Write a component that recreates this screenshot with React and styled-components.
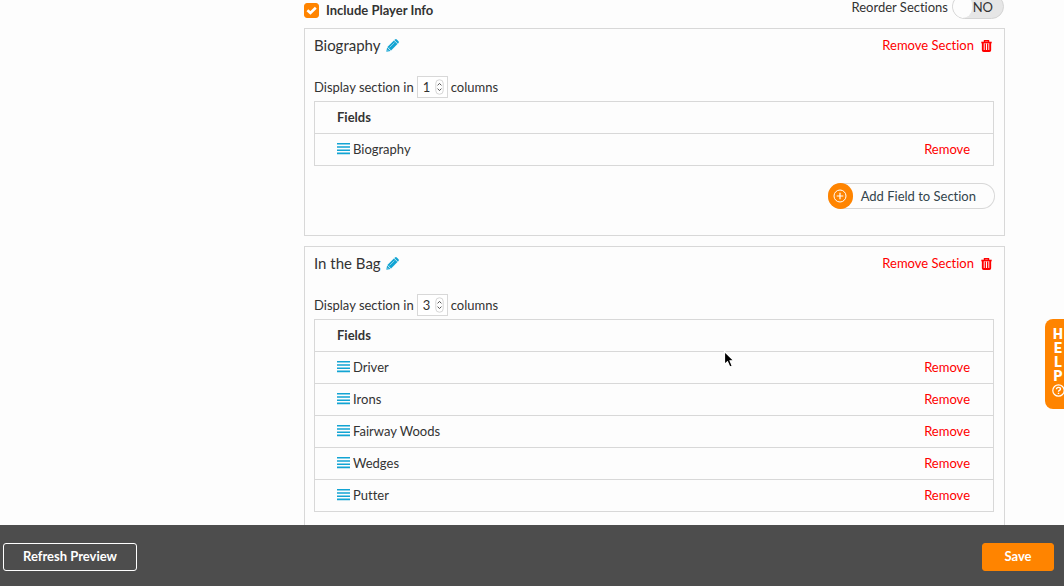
import {useState} from 'react'
import styled, {createGlobalStyle} from 'styled-components'

const GlobalStyle = createGlobalStyle`
    * {
        box-sizing: border-box;
    }
    body {
        margin: 0;
        background: #fdfdfd;
        overflow: hidden;
    }
    body, button, input {
        font-family: Lato, "Liberation Sans", sans-serif;
        font-size: 13px;
        font-variant-ligatures: none;
        line-height: 16px;
        color: #333;
    }
`

const Page = styled.div`
    display: flex;
    flex-direction: column;
    height: 100vh;
`

const Main = styled.main`
    flex: 1;
    min-height: 0;
    overflow: hidden;
    padding: 0 59px 0 304px;
`

const Toolbar = styled.div`
    display: flex;
    justify-content: space-between;
    align-items: center;
    height: 32px;
    margin: -6px 0 2px;
`

const CheckLabel = styled.label`
    display: flex;
    align-items: center;
    gap: 7px;
    font-weight: bold;
`

const Checkbox = styled.input`
    appearance: none;
    width: 15px;
    height: 15px;
    margin: 0;
    border-radius: 3px;
    border: 1px solid #ff8400;
    background: #fff;
    &:checked {
        background: #ff8400;
    }
`

const CheckBoxWrap = styled.span`
    position: relative;
    display: flex;
    svg {
        position: absolute;
        inset: 0;
        pointer-events: none;
    }
`

const ToggleLabel = styled.label`
    display: flex;
    align-items: center;
    align-self: flex-start;
    gap: 4px;
    margin-right: 1px;
`

const Toggle = styled.button`
    display: flex;
    align-items: center;
    width: 52px;
    height: 25px;
    padding: 0 10px 0 0;
    border: 1px solid #d4d4d4;
    border-radius: 13px;
    background: #e6e6e6;
    overflow: hidden;
    span {
        flex: 1;
        text-align: right;
    }
    &::before {
        content: '';
        width: 19px;
        height: 23px;
        border-radius: 10px;
        background: #fdfdfd;
    }
`

const Section = styled.section`
    padding: 0 9px 26px;
    margin-bottom: 10px;
    border: 1px solid #d8d8d8;
`

const SectionHeader = styled.header`
    display: flex;
    justify-content: space-between;
    align-items: center;
    height: 31px;
    margin-bottom: 16px;
    padding-right: 3px;
`

const Title = styled.h2`
    display: flex;
    align-items: center;
    gap: 5px;
    margin: 0;
    font-size: 15px;
    font-weight: normal;
`

const LinkButton = styled.button`
    display: inline-flex;
    align-items: center;
    gap: 7px;
    padding: 0;
    border: 0;
    background: none;
    color: ${props => props.color};
    cursor: pointer;
    svg {
        margin-top: 2px;
    }
`

const ColumnsLabel = styled.label`
    display: flex;
    align-items: center;
    gap: 3px;
    height: 22px;
    margin-bottom: 3px;
`

const NumberBox = styled.span`
    display: flex;
    align-items: center;
    width: 31px;
    height: 22px;
    padding: 0 3px 0 5px;
    border: 1px solid #d8d8d8;
    background: #fff;
    svg {
        flex: none;
    }
`

const NumberInput = styled.input`
    appearance: textfield;
    width: 12px;
    padding: 0;
    border: 0;
    background: none;
    outline: 0;
    &::-webkit-inner-spin-button {
        display: none;
    }
`

const TableWrap = styled.div`
    padding-right: 1px;
`

const Table = styled.table`
    width: 100%;
    border-collapse: collapse;
    border: 1px solid #d8d8d8;
    th, td {
        height: 32px;
        padding: 0 23px 2px 22px;
        border-top: 1px solid #d8d8d8;
        text-align: left;
    }
`

const FieldRow = styled.div`
    display: flex;
    align-items: center;
    justify-content: space-between;
`

const FieldName = styled.span`
    display: flex;
    align-items: center;
    gap: 3px;
`

const Actions = styled.div`
    display: flex;
    justify-content: flex-end;
    margin-top: 17px;
`

const AddButton = styled.button`
    display: flex;
    align-items: center;
    height: 26px;
    padding: 0 19px 0 0;
    gap: 8px;
    border: 0;
    border-radius: 13px;
    background: #fdfdfd;
    box-shadow: inset 0 0 0 1px #d8d8d8;
    color: #33444c;
`

const AddIcon = styled.span`
    display: flex;
    align-items: center;
    justify-content: center;
    width: 25px;
    height: 26px;
    border-radius: 13px;
    background: #ff8400;
`

const Footer = styled.footer`
    display: flex;
    justify-content: space-between;
    align-items: center;
    height: 61px;
    padding: 2px 10px 0 3px;
    background: #4d4d4d;
`

const FooterButton = styled.button`
    width: ${props => props.$primary ? '72px' : '134px'};
    height: 28px;
    padding: 0 0 2px;
    border: 1px solid ${props => props.$primary ? '#ff8400' : '#fff'};
    border-radius: 3px;
    background: ${props => props.$primary ? '#ff8400' : 'transparent'};
    color: #fff;
    font-weight: bold;
`

const HelpTab = styled.button`
    position: fixed;
    top: 319px;
    right: -7px;
    display: flex;
    flex-direction: column;
    align-items: center;
    width: 26px;
    height: 90px;
    padding: 8px 0 0;
    border: 0;
    border-radius: 8px 0 0 8px;
    background: #ff8400;
    color: #fff;
    font-family: Roboto, sans-serif;
    font-size: 14px;
    font-weight: 900;
    line-height: 14px;
    svg {
        margin-top: 1px;
    }
`

const Pointer = styled.svg`
    position: fixed;
    left: 723px;
    top: 350px;
    pointer-events: none;
`

const CheckIcon = () => (
    <svg width="15" height="15" viewBox="0 0 15 15" fill="none" stroke="#fff" strokeWidth="2.6">
        <path d="M3.4 7.2 6.4 10 11.8 4.8"/>
    </svg>
)

const PencilIcon = () => (
    <svg width="13" height="13" viewBox="0 0 13 13" fill="#12a4d3">
        <path d="M0.3 12.7 1.1 8.4 4.6 11.9Z"/>
        <path d="M1.4 7.9 7.9 1.5 11.5 5.1 5.1 11.6Z"/>
        <path d="M8.3 1.1 9 .5Q10 -.3 10.8.5L12.5 2.2Q13.3 3 12.5 4L11.9 4.7Z"/>
        <path d="M3.6 8.4 8.4 3.7" stroke="#fdfdfd" strokeWidth=".5"/>
        <path d="M1.2 10.8 2.2 11.8" stroke="#fdfdfd" strokeWidth=".6"/>
    </svg>
)

const TrashIcon = () => (
    <svg width="11" height="12" viewBox="0 0 11 12" fill="none" stroke="red">
        <path d="M0.3 2.5H10.7" strokeWidth="1.6"/>
        <path d="M3.5 2V.8H7.5V2" strokeWidth="1.4"/>
        <path d="M1.8 3V10.2Q1.8 11 2.6 11H8.4Q9.2 11 9.2 10.2V3" strokeWidth="1.9"/>
        <path d="M4.3 3.5V10.5M6.7 3.5V10.5" strokeWidth="1.3"/>
    </svg>
)

const DragIcon = () => (
    <svg width="13" height="12" viewBox="0 0 13 12" fill="#12a4d3">
        <path d="M0 0H13V1.6H0ZM0 3.2H13V4.8H0ZM0 6.4H13V8H0ZM0 9.6H13V11.2H0Z"/>
    </svg>
)

const SpinnerIcon = () => (
    <svg width="9" height="16" viewBox="0 0 9 16" fill="none">
        <rect x=".8" y=".8" width="7.4" height="14.4" rx="3.5" stroke="#ccc" strokeWidth=".8"/>
        <path d="M2.6 6.4 4.5 4.4 6.4 6.4M2.6 9.6 4.5 11.6 6.4 9.6" stroke="#555"/>
    </svg>
)

const PlusIcon = () => (
    <svg width="14" height="14" viewBox="0 0 14 14" fill="none" stroke="#fff">
        <circle cx="7" cy="7" r="6"/>
        <path d="M7 3.7V10.3M3.7 7H10.3" strokeWidth="1.2"/>
    </svg>
)

const QuestionIcon = () => (
    <svg width="13" height="13" viewBox="0 0 13 13" fill="none" stroke="#fff">
        <circle cx="6.5" cy="6.5" r="5.7" strokeWidth="1.2"/>
        <path d="M4.5 5.3Q4.5 3.4 6.5 3.4T8.5 5.1Q8.5 6 7.4 6.4 6.5 6.8 6.5 7.8M6.5 8.7V10.1" strokeWidth="1.4"/>
    </svg>
)

const sections = [
    {id: 'biography', title: 'Biography', columns: 1, fields: ['Biography'], canAdd: true},
    {id: 'bag', title: 'In the Bag', columns: 3, fields: ['Driver', 'Irons', 'Fairway Woods', 'Wedges', 'Putter']},
]

/**
 * One editable section with its table of fields
 */
const PlayerSection = props => {
    const [columns, setColumns] = useState(props.section.columns)

    return (
        <Section>
            <SectionHeader>
                <Title>
                    {props.section.title}
                    <LinkButton aria-label="Edit title"><PencilIcon/></LinkButton>
                </Title>
                <LinkButton color="red">
                    Remove Section
                    <TrashIcon/>
                </LinkButton>
            </SectionHeader>
            <ColumnsLabel>
                Display section in
                <NumberBox>
                    <NumberInput type="number" min="1" value={columns} onChange={e => setColumns(e.target.value)}/>
                    <SpinnerIcon/>
                </NumberBox>
                columns
            </ColumnsLabel>
            <TableWrap>
                <Table>
                    <thead>
                        <tr><th>Fields</th></tr>
                    </thead>
                    <tbody>
                        {props.section.fields.map(field => (
                            <tr key={field}>
                                <td>
                                    <FieldRow>
                                        <FieldName><DragIcon/>{field}</FieldName>
                                        <LinkButton color="red">Remove</LinkButton>
                                    </FieldRow>
                                </td>
                            </tr>
                        ))}
                    </tbody>
                </Table>
            </TableWrap>
            {props.section.canAdd && (
                <Actions>
                    <AddButton>
                        <AddIcon><PlusIcon/></AddIcon>
                        Add Field to Section
                    </AddButton>
                </Actions>
            )}
        </Section>
    )
}

const App = () => {
    const [include, setInclude] = useState(true)
    const [reorder, setReorder] = useState(false)

    return (
        <Page>
            <GlobalStyle/>
            <Main>
                <Toolbar>
                    <CheckLabel>
                        <CheckBoxWrap>
                            <Checkbox type="checkbox" checked={include} onChange={() => setInclude(!include)}/>
                            <CheckIcon/>
                        </CheckBoxWrap>
                        Include Player Info
                    </CheckLabel>
                    <ToggleLabel>
                        Reorder Sections
                        <Toggle role="switch" aria-checked={reorder} onClick={() => setReorder(!reorder)}>
                            <span>{reorder ? 'YES' : 'NO'}</span>
                        </Toggle>
                    </ToggleLabel>
                </Toolbar>
                {sections.map(section => <PlayerSection key={section.id} section={section}/>)}
            </Main>
            <Footer>
                <FooterButton>Refresh Preview</FooterButton>
                <FooterButton $primary>Save</FooterButton>
            </Footer>
            <HelpTab aria-label="Help">
                <span>H</span>
                <span>E</span>
                <span>L</span>
                <span>P</span>
                <QuestionIcon/>
            </HelpTab>
            <Pointer width="13" height="19" viewBox="0 0 13 19">
                <path d="M1.5 1.5V14.5L4.5 11.8 6.8 17 9.3 16 7.1 10.8H11Z" fill="#000" stroke="#fff" strokeWidth="1.2"/>
            </Pointer>
        </Page>
    )
}

export default App
